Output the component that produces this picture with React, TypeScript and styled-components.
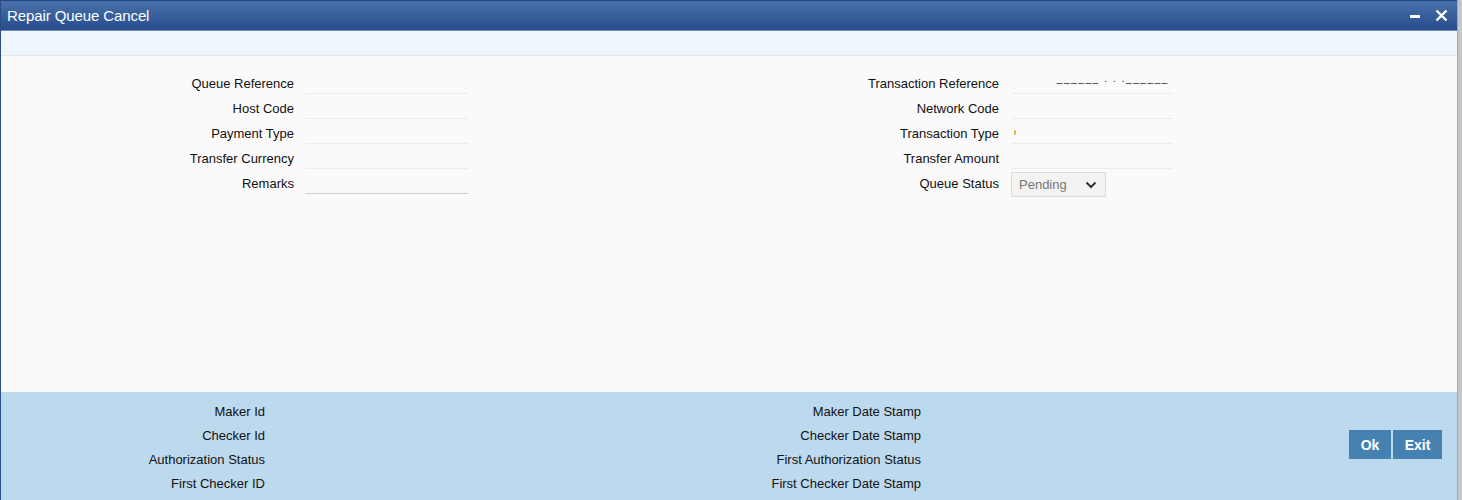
import React from 'react';
import styled, {createGlobalStyle} from "styled-components";

const GlobalStyle = createGlobalStyle`
  html, body {
    margin: 0;
    padding: 0;
    background: #fafafa;
  }
  body {
    font-family: "Liberation Sans", Arial, sans-serif;
  }
`

type FieldType = {
    label: string
    value?: string
    last?: boolean
    marker?: boolean
}

const leftFields: FieldType[] = [
    {label: "Queue Reference"},
    {label: "Host Code"},
    {label: "Payment Type"},
    {label: "Transfer Currency"},
    {label: "Remarks", last: true},
]

const rightFields: FieldType[] = [
    {label: "Transaction Reference", value: "______ . . .______"},
    {label: "Network Code"},
    {label: "Transaction Type", marker: true},
    {label: "Transfer Amount"},
]

const auditLeft = ["Maker Id", "Checker Id", "Authorization Status", "First Checker ID"]
const auditRight = ["Maker Date Stamp", "Checker Date Stamp", "First Authorization Status", "First Checker Date Stamp"]

export default function App() {
    return (
        <>
            <GlobalStyle/>
            <Screen>
                <Window>
                    <TitleBar>
                        <Title>Repair Queue Cancel</Title>
                        <TitleActions>
                            <TitleButton aria-label="minimize">
                                <svg width="12" height="12" viewBox="0 0 12 12">
                                    <rect x="1" y="5" width="10" height="3" fill="#fff"/>
                                </svg>
                            </TitleButton>
                            <TitleButton aria-label="close">
                                <svg width="13" height="13" viewBox="0 0 13 13">
                                    <path d="M1.5 1.5 L11.5 11.5 M11.5 1.5 L1.5 11.5" stroke="#fff" strokeWidth="2.4"/>
                                </svg>
                            </TitleButton>
                        </TitleActions>
                    </TitleBar>
                    <ToolBand/>
                    <Body>
                        <FormGrid>
                            <Column>
                                {leftFields.map(f => (
                                    <Row key={f.label}>
                                        <Label $width={304} $gap={11}>{f.label}</Label>
                                        <Input $last={f.last}/>
                                    </Row>
                                ))}
                            </Column>
                            <Column>
                                {rightFields.map(f => (
                                    <Row key={f.label}>
                                        <Label $width={1011 - 467} $gap={13}>{f.label}</Label>
                                        <RightInput>
                                            {f.marker && <Marker/>}
                                            {f.value && <Masked>{f.value}</Masked>}
                                        </RightInput>
                                    </Row>
                                ))}
                                <Row>
                                    <Label $width={1010 - 467} $gap={12}>Queue Status</Label>
                                    <Select>
                                        <span>Pending</span>
                                        <svg width="12" height="8" viewBox="0 0 12 8">
                                            <path d="M1.5 1.5 L6 6 L10.5 1.5" fill="none" stroke="#333" strokeWidth="2"/>
                                        </svg>
                                    </Select>
                                </Row>
                            </Column>
                        </FormGrid>
                    </Body>
                    <Footer>
                        <AuditGrid>
                            <AuditColumn $width={264}>
                                {auditLeft.map(l => <AuditLabel key={l}>{l}</AuditLabel>)}
                            </AuditColumn>
                            <AuditColumn $width={920 - 264}>
                                {auditRight.map(l => <AuditLabel key={l}>{l}</AuditLabel>)}
                            </AuditColumn>
                        </AuditGrid>
                        <Buttons>
                            <Button $width={42}>Ok</Button>
                            <Button $width={49}>Exit</Button>
                        </Buttons>
                    </Footer>
                </Window>
                <ScrollStrip/>
            </Screen>
        </>
    );
}

const Screen = styled.div`
  display: flex;
  width: 1462px;
  height: 500px;
  overflow: hidden;
`

const Window = styled.div`
  width: 1456px;
  height: 500px;
  display: flex;
  flex-direction: column;
  border-left: 1px solid #2a4e8c;
  border-right: 1px solid #9aa8b8;
  background: #fafafa;
`

const ScrollStrip = styled.div`
  flex: 1;
  background: #c6c6c6;
`

const TitleBar = styled.div`
  display: flex;
  align-items: center;
  justify-content: space-between;
  background: linear-gradient(to bottom, #4b70a8 0%, #36609c 50%, #284c8a 100%);
  border-top: 1px solid #23457f;
  border-bottom: 1px solid #6e8fa8;
  box-sizing: border-box;
  height: 31px;
  padding: 0 9px 0 6px;
`

const Title = styled.span`
  color: #ffffff;
  font-size: 15px;
  letter-spacing: -0.1px;
`

const TitleActions = styled.div`
  display: flex;
  align-items: center;
  gap: 14px;
`

const TitleButton = styled.span`
  display: flex;
  align-items: center;
`

const ToolBand = styled.div`
  height: 24px;
  background: #eef5fd;
  border-bottom: 1px solid #e2e6ea;
`

const Body = styled.div`
  flex: 1;
  padding-top: 16px;
`

const FormGrid = styled.div`
  display: flex;
`

const Column = styled.div`
  display: flex;
  flex-direction: column;
`

const Row = styled.div`
  display: flex;
  align-items: flex-start;
  height: 25px;
`

const Label = styled.div<{ $width: number, $gap: number }>`
  width: ${p => p.$width}px;
  padding-right: ${p => p.$gap}px;
  box-sizing: border-box;
  text-align: right;
  font-size: 13px;
  color: #111;
  line-height: 24px;
  white-space: nowrap;
`

const Input = styled.div<{ $last?: boolean }>`
  width: 163px;
  height: 21px;
  border-bottom: 1px solid ${p => p.$last ? '#cfcfcf' : '#ebebeb'};
`

const RightInput = styled.div`
  position: relative;
  width: 161px;
  height: 21px;
  border-bottom: 1px solid #ebebeb;
`

const Masked = styled.span`
  position: absolute;
  right: 4px;
  top: 1px;
  font-size: 10px;
  color: #222;
  letter-spacing: 1.6px;
  white-space: nowrap;
`

const Marker = styled.span`
  position: absolute;
  left: 2px;
  top: 8px;
  width: 2px;
  height: 5px;
  background: #f0b050;
  border-radius: 1px;
`

const Select = styled.div`
  width: 95px;
  height: 25px;
  box-sizing: border-box;
  border: 1px solid #dcdcdc;
  background: #f3f3f1;
  display: flex;
  align-items: center;
  justify-content: space-between;
  padding: 0 8px 0 7px;
  font-size: 13px;
  color: #777;
`

const Footer = styled.div`
  height: 108px;
  background: #bdd9ed;
  display: flex;
  justify-content: space-between;
`

const AuditGrid = styled.div`
  display: flex;
  padding-top: 8px;
`

const AuditColumn = styled.div<{ $width: number }>`
  width: ${p => p.$width}px;
  display: flex;
  flex-direction: column;
  align-items: flex-end;
`

const AuditLabel = styled.div`
  font-size: 13px;
  color: #111;
  line-height: 24px;
`

const Buttons = styled.div`
  display: flex;
  gap: 2px;
  padding-top: 38px;
  padding-right: 15px;
  align-items: flex-start;
`

const Button = styled.button<{ $width: number }>`
  width: ${p => p.$width}px;
  height: 29px;
  border: none;
  background: #4581b1;
  color: #fff;
  font-family: "Liberation Sans", Arial, sans-serif;
  font-weight: bold;
  font-size: 14px;
  padding: 0;
`
